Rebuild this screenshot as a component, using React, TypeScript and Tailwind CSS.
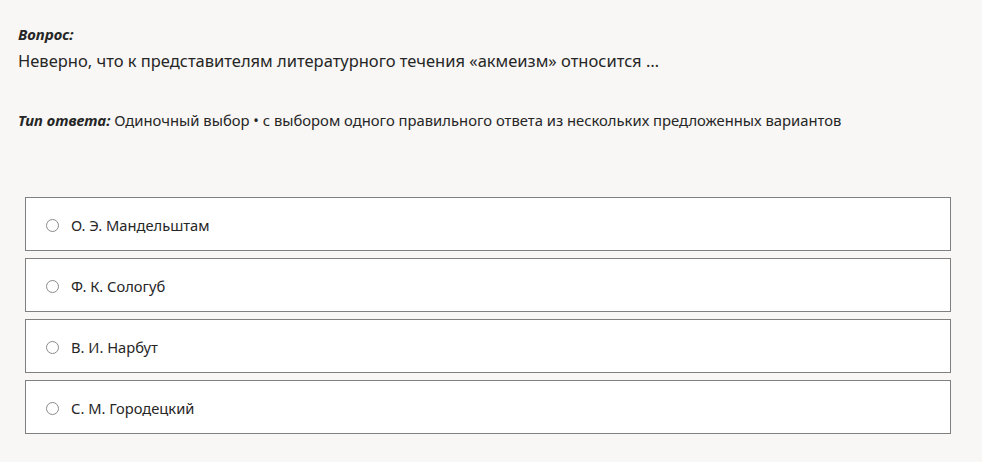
const options = ["О. Э. Мандельштам", "Ф. К. Сологуб", "В. И. Нарбут", "С. М. Городецкий"];

export default function App() {
  return (
    <div className="min-h-[462px] w-[982px] bg-[#f8f7f5] text-[#262626] font-['Noto_Sans',sans-serif]">
      <div className="px-[18px] pt-[24px]">
        <div className="text-[15px] font-bold italic leading-[21px]">Вопрос:</div>
        <div className="mt-[5px] text-[16.5px] leading-[22px]">
          Неверно, что к представителям литературного течения «акмеизм» относится …
        </div>
        <div className="mt-[38px] text-[14.8px] leading-[20px]">
          <span className="font-bold italic">Тип ответа:</span> Одиночный выбор • с выбором одного правильного ответа из нескольких предложенных вариантов
        </div>
      </div>
      <div className="mt-[67px] ml-[25px] flex w-[926px] flex-col gap-[7px]">
        {options.map((o) => (
          <label key={o} className="flex h-[54px] items-center border border-[#808080] bg-white pl-[20px] pt-[3px]">
            <span className="h-[13px] w-[13px] rounded-full border border-[#8a8a8a] bg-white" />
            <span className="ml-[12px] text-[14.7px]">{o}</span>
          </label>
        ))}
      </div>
    </div>
  );
}
